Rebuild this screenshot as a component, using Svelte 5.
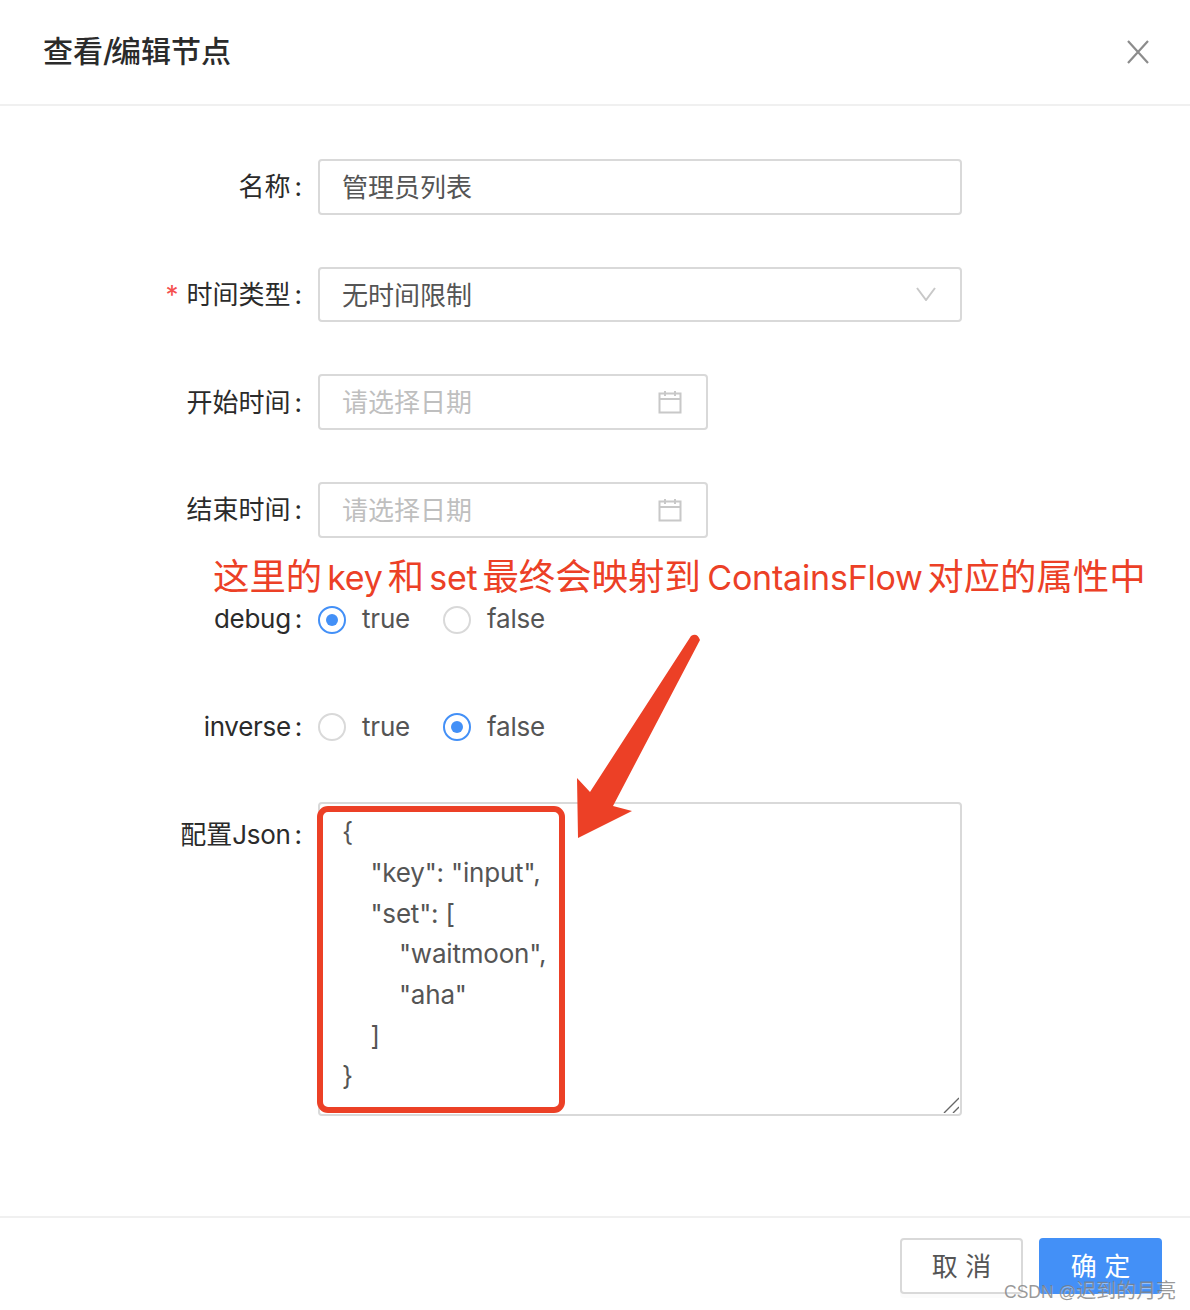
<script>
  const jsonText = `{
    "key": "input",
    "set": [
        "waitmoon",
        "aha"
    ]
}`;

  const radios = [
    { label: "debug", value: true },
    { label: "inverse", value: false }
  ];
</script>

<div class="modal">
  <header class="head">
    <h1>查看<span class="slash">/</span>编辑节点</h1>
    <svg class="close" viewBox="0 0 22 24" width="22" height="24">
      <path d="M1 1 L21 23 M21 1 L1 23" />
    </svg>
  </header>

  <div class="body">
    <div class="row">
      <span class="label">名称</span>
      <div class="field wide"><span class="val">管理员列表</span></div>
    </div>

    <div class="row">
      <span class="label"><i>*</i>时间类型</span>
      <div class="field wide">
        <span class="val">无时间限制</span>
        <svg class="chevron" viewBox="0 0 20 14" width="20" height="14">
          <path d="M1 1 L10 13 L19 1" />
        </svg>
      </div>
    </div>

    {#each ["开始时间", "结束时间"] as name}
      <div class="row">
        <span class="label">{name}</span>
        <div class="field date">
          <span class="val placeholder">请选择日期</span>
          <svg class="cal" viewBox="0 0 24 24" width="24" height="24">
            <path d="M1.5 3.5 H22.5 V22.5 H1.5 Z M1.5 9 H22.5 M7 1 V6 M17 1 V6" />
          </svg>
        </div>
      </div>
    {/each}

    {#each radios as r}
      <div class="row">
        <span class="label latin">{r.label}</span>
        <div class="radios">
          <span class="radio" class:on={r.value}></span>
          <span class="rtext">true</span>
          <span class="radio" class:on={!r.value}></span>
          <span class="rtext">false</span>
        </div>
      </div>
    {/each}

    <div class="row last">
      <span class="label">配置<span class="tight">Json</span></span>
      <div class="area">
        <textarea readonly value={jsonText}></textarea>
        <svg class="grip" viewBox="0 0 16 16" width="16" height="16">
          <path d="M1 16 L16 1 M10 16 L16 10" />
        </svg>
      </div>
    </div>
  </div>

  <footer class="foot">
    <button class="btn">取 消</button>
    <button class="btn primary">确 定</button>
  </footer>

  <!-- annotations drawn over the screenshot -->
  <div class="note">这里的<span>key</span>和<span>set</span>最终会映射到<span class="flow">ContainsFlow</span>对应的属性中</div>
  <div class="redbox"></div>
  <svg class="arrow" viewBox="0 0 1190 1310" width="1190" height="1310">
    <path d="M691 636 Q697 632 700 640 L613 806 L632 811 L578 838 L577 778 L590 792 Z" />
  </svg>
  <div class="mark">CSDN @<span>迟到的月亮</span></div>
</div>

<style>
  :global(body) {
    margin: 0;
    background: #fff;
  }

  .modal {
    position: relative;
    width: 1190px;
    height: 1310px;
    overflow: hidden;
    font-family: Inter, "Noto Sans CJK SC", sans-serif;
    font-size: 26px;
    color: #555;
  }

  .head {
    height: 104px;
    border-bottom: 2px solid #f0f0f0;
    display: flex;
    align-items: center;
    justify-content: space-between;
    padding: 0 41px 0 43px;
  }

  h1 {
    margin: 0 0 3px;
    font-size: 30px;
    line-height: 1;
    font-weight: 500;
    color: #2b2b2b;
  }

  .slash {
    letter-spacing: -3px;
  }

  .close path {
    fill: none;
    stroke: #8c8c8c;
    stroke-width: 2.2;
  }

  .body {
    padding-top: 53px;
  }

  .row {
    display: flex;
    align-items: center;
    height: 55.7px;
    margin-bottom: 52px;
  }

  .row.last {
    align-items: flex-start;
    height: 314px;
    margin: -3px 0 0;
  }

  .label {
    width: 318px;
    box-sizing: border-box;
    padding: 0 16px 4px 0;
    text-align: right;
    color: #2b2b2b;
    flex: none;
  }

  .label.latin {
    padding: 2px 16px 0 0;
    letter-spacing: -0.3px;
  }

  .tight {
    letter-spacing: -0.3px;
  }

  .label::after {
    content: ":";
    margin-left: 4px;
  }

  .label i {
    font-style: normal;
    color: #f5504f;
    margin-right: 8px;
  }

  .row.last .label {
    padding-top: 12px;
  }

  .field {
    height: 100%;
    box-sizing: border-box;
    border: 2px solid #d9d9d9;
    border-radius: 4px;
    padding: 0 22px;
    display: flex;
    align-items: center;
    justify-content: space-between;
  }

  .val {
    padding-bottom: 3px;
  }

  .wide {
    width: 644px;
  }

  .date {
    width: 390px;
  }

  .placeholder {
    color: #bfbfbf;
  }

  .chevron path,
  .cal path {
    fill: none;
    stroke: #c8c8c8;
    stroke-width: 2;
  }

  .chevron {
    margin: 0 2px 1px 0;
  }

  .cal {
    margin-right: 2px;
  }

  .radios {
    display: flex;
    align-items: center;
  }

  .radio {
    width: 28px;
    height: 28px;
    box-sizing: border-box;
    border: 2px solid #d9d9d9;
    border-radius: 50%;
    position: relative;
    margin-top: 4px;
  }

  .radio.on {
    border-color: #4390f7;
  }

  .radio.on::after {
    content: "";
    position: absolute;
    left: 6px;
    top: 6px;
    width: 12px;
    height: 12px;
    border-radius: 50%;
    background: #4390f7;
  }

  .rtext {
    margin: 0 32px 0 16px;
    padding-top: 2px;
    width: 49px;
    letter-spacing: -0.2px;
  }

  .area {
    position: relative;
    width: 644px;
    height: 314px;
  }

  textarea {
    display: block;
    width: 100%;
    height: 100%;
    box-sizing: border-box;
    margin: 0;
    padding: 8px 22px;
    border: 2px solid #d9d9d9;
    border-radius: 4px;
    font: inherit;
    line-height: 40.7px;
    letter-spacing: -0.2px;
    color: #555;
    outline: none;
    overflow: hidden;
    resize: none;
  }

  .grip {
    position: absolute;
    right: 3px;
    bottom: 3px;
  }

  .grip path {
    fill: none;
    stroke: #666;
    stroke-width: 1.4;
  }

  .foot {
    position: absolute;
    left: 0;
    right: 0;
    top: 1216px;
    border-top: 2px solid #f0f0f0;
    padding: 20px 28px 0 0;
    display: flex;
    justify-content: flex-end;
    gap: 16px;
  }

  .btn {
    width: 123px;
    height: 56px;
    box-sizing: border-box;
    border: 2px solid #d9d9d9;
    border-radius: 4px;
    background: #fff;
    font: inherit;
    color: #555;
    padding: 0 0 4px;
    box-shadow: 0 4px 0 rgba(0, 0, 0, 0.015);
  }

  .primary {
    background: #4390f7;
    border-color: #4390f7;
    color: #fff;
  }

  .note {
    position: absolute;
    left: 213px;
    top: 552px;
    font-size: 36.4px;
    line-height: 50px;
    color: #ec4026;
    white-space: nowrap;
  }

  .note span {
    font-size: 34px;
    letter-spacing: -0.2px;
    margin: 0 5px;
  }

  .note span.flow {
    margin: 0 4.5px 0 6.5px;
  }

  .redbox {
    position: absolute;
    left: 317px;
    top: 806px;
    width: 248px;
    height: 307px;
    box-sizing: border-box;
    border: 6px solid #ec4026;
    border-radius: 11px;
  }

  .arrow {
    position: absolute;
    left: 0;
    top: 0;
    pointer-events: none;
  }

  .arrow path {
    fill: #ec4026;
  }

  .mark {
    position: absolute;
    left: 1004px;
    top: 1278px;
    font-family: "Liberation Sans", "Noto Sans CJK SC", sans-serif;
    font-size: 17.5px;
    line-height: 26px;
    color: rgba(120, 120, 120, 0.75);
    text-shadow: 0 1px 1px rgba(255, 255, 255, 0.5);
    white-space: nowrap;
  }

  .mark span {
    font-size: 20px;
  }
</style>
